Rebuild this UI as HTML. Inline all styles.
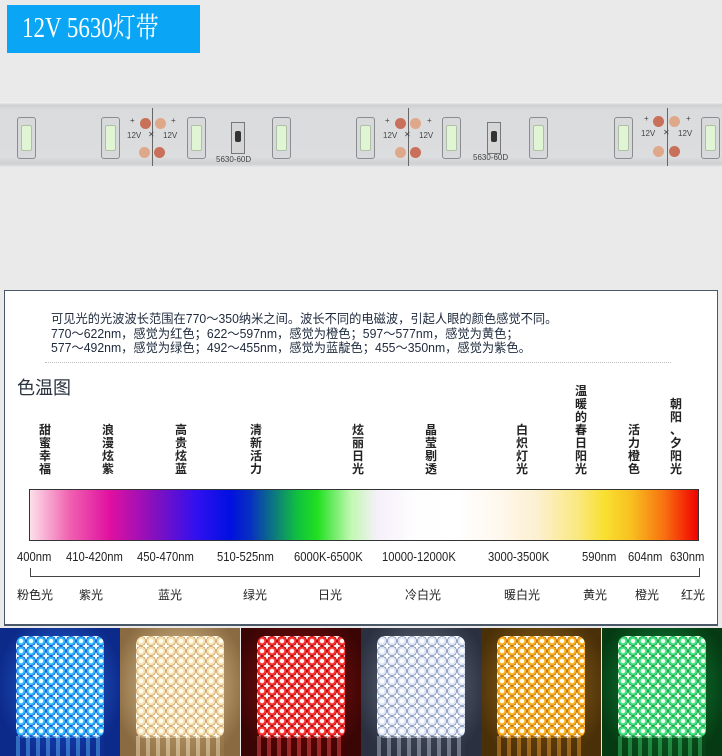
<!DOCTYPE html>
<html><head><meta charset="utf-8"><style>
*{margin:0;padding:0;box-sizing:border-box}
body{width:722px;height:756px;overflow:hidden;background:#ebeaea;font-family:"Liberation Sans","Noto Sans CJK SC",sans-serif;position:relative}
.a{position:absolute}
.title{left:7px;top:5px;width:193px;height:48px;background:#0aa6f5}
.title span{position:absolute;left:15px;top:7px;color:#fff;font-family:"Liberation Serif","Noto Serif CJK SC",serif;font-size:28px;line-height:34px;white-space:nowrap;transform:scaleX(.82);transform-origin:left}
.strip{left:0;top:102px;width:722px;height:65px;background:linear-gradient(#f4f4f4 0,#cfd0d2 3px,#dadbdd 8px,#dcdddf 55px,#cfd0d2 62px,#e8e8e8 65px)}
.led{width:19px;height:42px;top:117px;border:1.5px solid #8a8c90;border-radius:3px;background:#d8d9db}
.led i{position:absolute;left:3px;top:7px;width:11px;height:26px;background:#dff5d4;border:1px solid #b0c0a8;border-radius:2px}
.pad{width:11px;height:11px;border-radius:50%;background:#e0a88a}
.pad.d{background:#c8705a}
.cut{width:1px;height:58px;top:108px;background:#666}
.sm{font-size:8px;color:#444}
.res{width:14px;height:32px;top:122px;border:1px solid #777;background:#d6d6d6}
.res i{position:absolute;left:3px;top:8px;width:6px;height:11px;background:#333;border-radius:2px}
.panel{left:4px;top:290px;width:714px;height:336px;background:#fff;border:1.5px solid #4a5868;border-bottom-width:2px}
.txt{left:51px;font-size:12.5px;color:#1e2a3c;white-space:nowrap;transform:scaleX(.98);transform-origin:left}
.v{font-size:12px;line-height:13px;width:14px;color:#222;text-align:center;font-weight:bold}
.w{top:550px;font-size:12.5px;color:#222;white-space:nowrap;transform:scaleX(.9);transform-origin:left}
.b{top:586px;font-size:12px;color:#222;white-space:nowrap}
.ph{top:628px;width:120.3px;height:128px;overflow:hidden}
.cyl{position:absolute;left:16px;top:8px;width:88px;height:102px;border-radius:8px}
.ref{position:absolute;left:16px;top:108px;width:88px;height:20px;opacity:.45}
</style></head><body>
<div class="a title"><span>12V 5630灯带</span></div>
<div class="a strip"></div>
<div class="a led" style="left:17px"><i></i></div>
<div class="a led" style="left:101px"><i></i></div>
<div class="a led" style="left:187px"><i></i></div>
<div class="a led" style="left:272px"><i></i></div>
<div class="a led" style="left:356px"><i></i></div>
<div class="a led" style="left:442px"><i></i></div>
<div class="a led" style="left:529px"><i></i></div>
<div class="a led" style="left:614px"><i></i></div>
<div class="a led" style="left:701px"><i></i></div>
<div class="a cut" style="left:152px"></div>
<div class="a pad d" style="left:140px;top:118px"></div><div class="a pad" style="left:155px;top:118px"></div>
<div class="a pad" style="left:139px;top:147px"></div><div class="a pad d" style="left:154px;top:147px"></div>
<div class="a sm" style="left:127px;top:131px">12V</div><div class="a sm" style="left:163px;top:131px">12V</div>
<div class="a sm" style="left:130px;top:116px">+</div><div class="a sm" style="left:171px;top:116px">+</div>
<div class="a sm" style="left:148px;top:130px">✕</div>
<div class="a cut" style="left:408px"></div>
<div class="a pad d" style="left:395px;top:118px"></div><div class="a pad" style="left:410px;top:118px"></div>
<div class="a pad" style="left:395px;top:147px"></div><div class="a pad d" style="left:410px;top:147px"></div>
<div class="a sm" style="left:383px;top:131px">12V</div><div class="a sm" style="left:419px;top:131px">12V</div>
<div class="a sm" style="left:385px;top:116px">+</div><div class="a sm" style="left:427px;top:116px">+</div>
<div class="a sm" style="left:404px;top:130px">✕</div>
<div class="a cut" style="left:667px"></div>
<div class="a pad d" style="left:653px;top:116px"></div><div class="a pad" style="left:669px;top:116px"></div>
<div class="a pad" style="left:653px;top:146px"></div><div class="a pad d" style="left:669px;top:146px"></div>
<div class="a sm" style="left:641px;top:129px">12V</div><div class="a sm" style="left:678px;top:129px">12V</div>
<div class="a sm" style="left:644px;top:114px">+</div><div class="a sm" style="left:686px;top:114px">+</div>
<div class="a sm" style="left:663px;top:128px">✕</div>
<div class="a res" style="left:231px"><i></i></div>
<div class="a sm" style="left:216px;top:155px">5630-60D</div>
<div class="a res" style="left:487px"><i></i></div>
<div class="a sm" style="left:473px;top:153px">5630-60D</div>

<div class="a panel"></div>
<div class="a txt" style="top:308px">可见光的光波波长范围在770～350纳米之间。波长不同的电磁波，引起人眼的颜色感觉不同。</div>
<div class="a txt" style="top:323px">770～622nm，感觉为红色；622～597nm，感觉为橙色；597～577nm，感觉为黄色；</div>
<div class="a txt" style="top:337px">577～492nm，感觉为绿色；492～455nm，感觉为蓝靛色；455～350nm，感觉为紫色。</div>
<div class="a" style="left:45px;top:362px;width:626px;border-top:1.5px dotted #bbb"></div>
<div class="a" style="left:17px;top:374px;font-size:18px;color:#2a3340">色温图</div>

<div class="a v" style="left:38px;top:424px">甜<br>蜜<br>幸<br>福</div>
<div class="a v" style="left:101px;top:424px">浪<br>漫<br>炫<br>紫</div>
<div class="a v" style="left:174px;top:424px">高<br>贵<br>炫<br>蓝</div>
<div class="a v" style="left:249px;top:424px">清<br>新<br>活<br>力</div>
<div class="a v" style="left:351px;top:424px">炫<br>丽<br>日<br>光</div>
<div class="a v" style="left:424px;top:424px">晶<br>莹<br>剔<br>透</div>
<div class="a v" style="left:515px;top:424px">白<br>炽<br>灯<br>光</div>
<div class="a v" style="left:574px;top:385px">温<br>暖<br>的<br>春<br>日<br>阳<br>光</div>
<div class="a v" style="left:627px;top:424px">活<br>力<br>橙<br>色</div>
<div class="a v" style="left:669px;top:398px">朝<br>阳<br>、<br>夕<br>阳<br>光</div>

<div class="a" style="left:29px;top:489px;width:670px;height:52px;border:1px solid #333;background:linear-gradient(90deg,#fde0ea 0%,#f060b0 6%,#e010a0 12%,#8010c0 19%,#3010f0 25%,#0010e0 30%,#0830c0 33%,#10c040 40%,#20e020 43%,#c0f8b0 48%,#f6f0fa 52%,#fefefe 58%,#ffffff 64%,#fff8ee 70%,#fcf0d0 76%,#fae880 82%,#f8e030 86%,#f8c020 90%,#f87010 95%,#f00000 100%)"></div>

<div class="a w" style="left:17px">400nm</div>
<div class="a w" style="left:66px">410-420nm</div>
<div class="a w" style="left:137px">450-470nm</div>
<div class="a w" style="left:217px">510-525nm</div>
<div class="a w" style="left:294px">6000K-6500K</div>
<div class="a w" style="left:382px">10000-12000K</div>
<div class="a w" style="left:488px">3000-3500K</div>
<div class="a w" style="left:582px">590nm</div>
<div class="a w" style="left:628px">604nm</div>
<div class="a w" style="left:670px">630nm</div>
<div class="a" style="left:30px;top:568px;width:670px;height:9px;border:1px solid #444;border-top:none"></div>

<div class="a b" style="left:17px">粉色光</div>
<div class="a b" style="left:79px">紫光</div>
<div class="a b" style="left:158px">蓝光</div>
<div class="a b" style="left:243px">绿光</div>
<div class="a b" style="left:318px">日光</div>
<div class="a b" style="left:405px">冷白光</div>
<div class="a b" style="left:504px">暖白光</div>
<div class="a b" style="left:583px">黄光</div>
<div class="a b" style="left:635px">橙光</div>
<div class="a b" style="left:681px">红光</div>

<div class="a ph" style="left:0;background:radial-gradient(ellipse at 50% 45%,#2a6ae0,#0c2a8a 75%)"><div class="cyl" style="background:repeating-radial-gradient(circle at 5px 5px,#e8ffff 0 2px,#30b8ff 2.5px 4px,#1050d0 4.5px 5px),#1a70e0;background-size:10px 10px"></div><div class="ref" style="background:repeating-linear-gradient(90deg,#60c0ff 0 4px,#1030a0 4px 10px)"></div></div>
<div class="a ph" style="left:120px;background:radial-gradient(ellipse at 50% 45%,#f0d8a8,#8a6a40 80%)"><div class="cyl" style="background:repeating-radial-gradient(circle at 5px 5px,#fffff0 0 2px,#f8e0b0 2.5px 4px,#c8a070 4.5px 5px),#f0d8a8;background-size:10px 10px"></div><div class="ref" style="background:repeating-linear-gradient(90deg,#fff0d0 0 4px,#a08050 4px 10px)"></div></div>
<div class="a ph" style="left:241px;background:radial-gradient(ellipse at 50% 45%,#901010,#3a0505 80%)"><div class="cyl" style="background:repeating-radial-gradient(circle at 5px 5px,#fff0f0 0 2px,#ff3030 2.5px 4px,#b00000 4.5px 5px),#e01010;background-size:10px 10px"></div><div class="ref" style="background:repeating-linear-gradient(90deg,#ff5050 0 4px,#500000 4px 10px)"></div></div>
<div class="a ph" style="left:361px;background:radial-gradient(ellipse at 50% 45%,#707888,#2a3040 80%)"><div class="cyl" style="background:repeating-radial-gradient(circle at 5px 5px,#ffffff 0 2px,#e0e8f8 2.5px 4px,#8090b0 4.5px 5px),#e8eef8;background-size:10px 10px"></div><div class="ref" style="background:repeating-linear-gradient(90deg,#c0c8d8 0 4px,#303848 4px 10px)"></div></div>
<div class="a ph" style="left:481px;background:radial-gradient(ellipse at 50% 45%,#a07020,#4a3008 80%)"><div class="cyl" style="background:repeating-radial-gradient(circle at 5px 5px,#fffff0 0 2px,#ffb020 2.5px 4px,#c07000 4.5px 5px),#f0a010;background-size:10px 10px"></div><div class="ref" style="background:repeating-linear-gradient(90deg,#f0a030 0 4px,#503008 4px 10px)"></div></div>
<div class="a ph" style="left:602px;background:radial-gradient(ellipse at 50% 45%,#109040,#053a12 80%)"><div class="cyl" style="background:repeating-radial-gradient(circle at 5px 5px,#f0fff0 0 2px,#40e080 2.5px 4px,#10a040 4.5px 5px),#30c060;background-size:10px 10px"></div><div class="ref" style="background:repeating-linear-gradient(90deg,#40d070 0 4px,#084a18 4px 10px)"></div></div>
</body></html>
